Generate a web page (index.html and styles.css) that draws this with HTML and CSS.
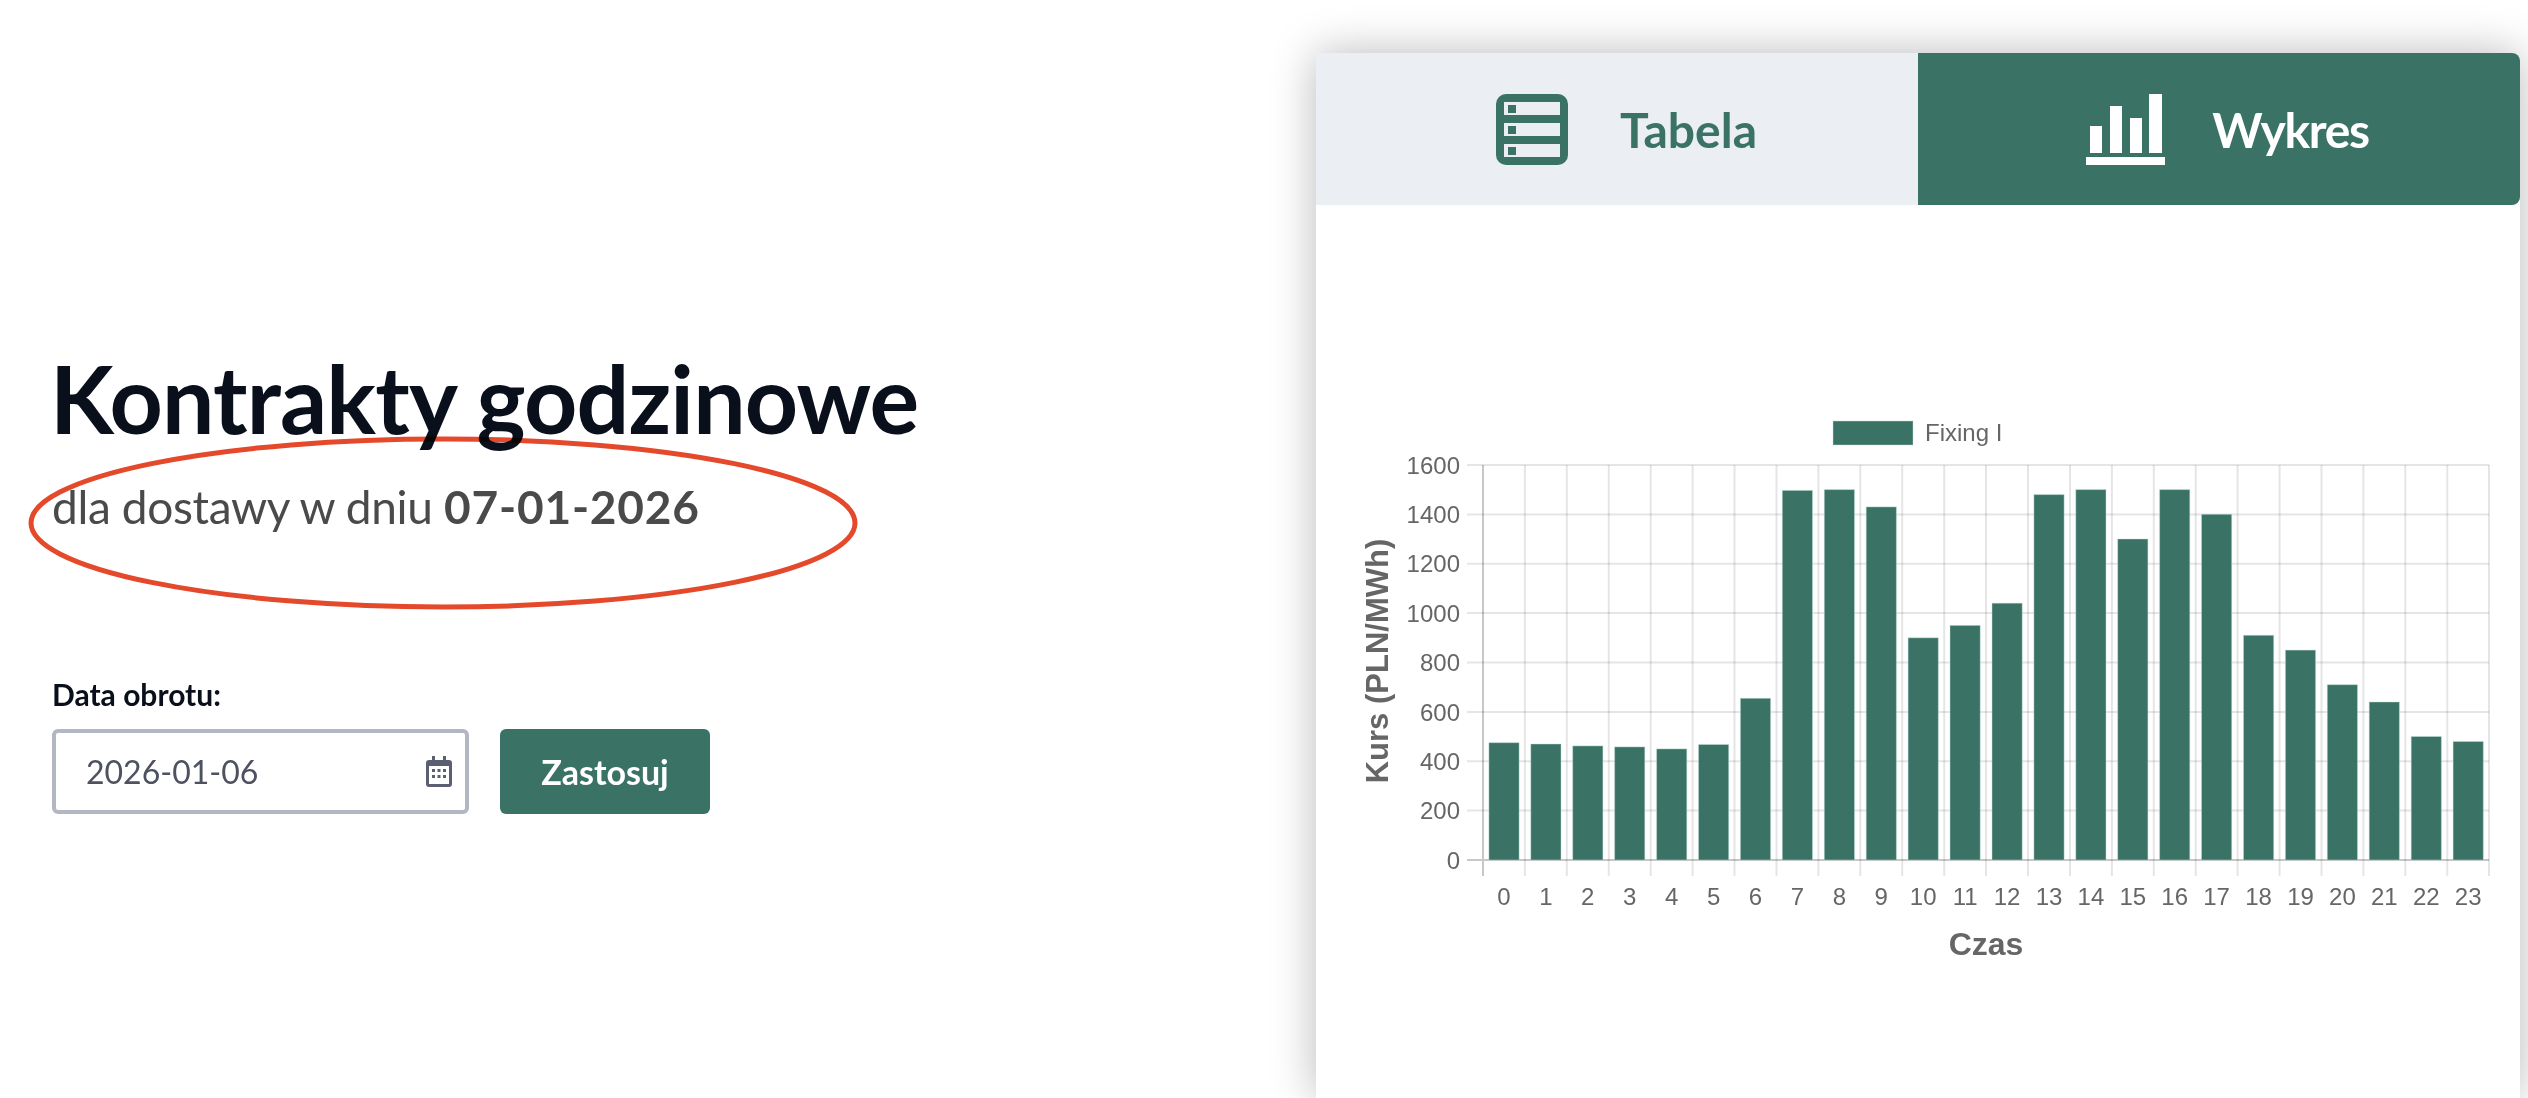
FILE: index.html
```html
<!DOCTYPE html>
<html lang="pl">
<head>
  <meta charset="UTF-8" />
  <meta name="viewport" content="width=device-width, initial-scale=1.0"/>
  <title>Kontrakty godzinowe</title>
  <link rel="stylesheet" href="styles.css">
</head>
<body>
  <div class="top-edge"></div>
  <div class="page">
    <section class="intro">
      <h1>Kontrakty godzinowe</h1>
      <p class="subtitle">dla dostawy w dniu <strong>07-01-2026</strong></p>

      <svg class="annotation" width="850" height="190" viewBox="0 0 850 190">
        <ellipse cx="425" cy="95" rx="412" ry="84" />
      </svg>

      <form class="date-form">
        <label for="date">Data obrotu:</label>
        <div class="date-row">
          <div class="date-input">
            <input type="text" id="date" value="2026-01-06" />
            <svg class="calendar" width="26" height="31" viewBox="0 0 26 31">
              <path fill="#5b5f71" fill-rule="evenodd" d="M6 0h3v4h8V0h3v4h3a3 3 0 0 1 3 3v21a3 3 0 0 1-3 3H3a3 3 0 0 1-3-3V7a3 3 0 0 1 3-3h3zM3 10v18h20V10z" />
              <path fill="#5b5f71" d="M6 13h3v3H6zM11.500 13h3v3h-3zM17 13h3v3h-3zM6 19h3v3H6zM11.500 19h3v3h-3zM17 19h3v3h-3z" />
            </svg>
          </div>
          <button type="button">Zastosuj</button>
        </div>
      </form>
    </section>

    <section class="card">
      <div class="tabs">
        <a class="tab">
          <svg width="72" height="71" viewBox="0 0 72 71">
            <rect width="72" height="71" rx="10" fill="#3a7265" />
            <path fill="#ebeff4" d="M8 8h56v13H8zM8 29h56v13H8zM8 50h56v13H8z" />
            <path fill="#3a7265" d="M12 11h8v8h-8zM12 32h8v8h-8zM12 53h8v8h-8z" />
          </svg>
          <span>Tabela</span>
        </a>
        <a class="tab active">
          <svg width="80" height="71" viewBox="0 0 80 71">
            <path fill="#fff" d="M4 32h12v27H4zM24 12h12v47H24zM44 24h12v35H44zM63 0h13v59H63zM0 63h79v8H0z" />
          </svg>
          <span>Wykres</span>
        </a>
      </div>

      <svg class="chart" width="1204" height="845" viewBox="1 0 1204 845">
        <!-- legend -->
        <rect class="bar" x="518" y="216" width="80" height="24" />
        <text class="tick" x="610" y="236">Fixing I</text>

        <!-- grid -->
        <path class="grid" d="M152 260H1174M152 309.400H1174M152 358.800H1174M152 408.100H1174M152 457.500H1174M152 506.900H1174M152 556.300H1174M152 605.600H1174" />
        <path class="grid" d="M209.900 260V671M251.800 260V671M293.800 260V671M335.700 260V671M377.600 260V671M419.500 260V671M461.500 260V671M503.400 260V671M545.300 260V671M587.200 260V671M629.200 260V671M671 260V671M713 260V671M755 260V671M796.900 260V671M838.800 260V671M880.700 260V671M922.600 260V671M964.600 260V671M1006.500 260V671M1048.400 260V671M1090.300 260V671M1132.300 260V671M1174 260V671" />
        <path class="axis" d="M168 260V671M152 655H1174" />

        <!-- y ticks -->
        <g class="tick y-ticks">
          <text x="145" y="268.500">1600</text>
          <text x="145" y="318">1400</text>
          <text x="145" y="367">1200</text>
          <text x="145" y="416.500">1000</text>
          <text x="145" y="466">800</text>
          <text x="145" y="515.500">600</text>
          <text x="145" y="565">400</text>
          <text x="145" y="614">200</text>
          <text x="145" y="663.500">0</text>
        </g>

        <!-- bars -->
        <g class="bars">
          <rect class="bar" x="173.900" y="537.700" width="30.200" height="117.300" />
          <rect class="bar" x="215.800" y="539" width="30.200" height="116" />
          <rect class="bar" x="257.700" y="540.900" width="30.200" height="114.100" />
          <rect class="bar" x="299.600" y="541.900" width="30.200" height="113.100" />
          <rect class="bar" x="341.600" y="543.900" width="30.200" height="111.100" />
          <rect class="bar" x="383.500" y="539.500" width="30.200" height="115.500" />
          <rect class="bar" x="425.400" y="493.300" width="30.200" height="161.700" />
          <rect class="bar" x="467.300" y="285.400" width="30.200" height="369.600" />
          <rect class="bar" x="509.300" y="284.600" width="30.200" height="370.400" />
          <rect class="bar" x="551.200" y="301.900" width="30.200" height="353.100" />
          <rect class="bar" x="593.100" y="432.800" width="30.200" height="222.200" />
          <rect class="bar" x="635" y="420.400" width="30.200" height="234.600" />
          <rect class="bar" x="677" y="398.200" width="30.200" height="256.800" />
          <rect class="bar" x="718.900" y="289.600" width="30.200" height="365.400" />
          <rect class="bar" x="760.800" y="284.600" width="30.200" height="370.400" />
          <rect class="bar" x="802.700" y="334" width="30.200" height="321" />
          <rect class="bar" x="844.600" y="284.600" width="30.200" height="370.400" />
          <rect class="bar" x="886.500" y="309.300" width="30.200" height="345.700" />
          <rect class="bar" x="928.500" y="430.300" width="30.200" height="224.700" />
          <rect class="bar" x="970.400" y="445.100" width="30.200" height="209.900" />
          <rect class="bar" x="1012.300" y="479.700" width="30.200" height="175.300" />
          <rect class="bar" x="1054.200" y="497" width="30.200" height="158" />
          <rect class="bar" x="1096.200" y="531.500" width="30.200" height="123.500" />
          <rect class="bar" x="1138.100" y="536.500" width="30.200" height="118.500" />
        </g>

        <!-- x ticks -->
        <g class="tick x-ticks">
          <text x="189" y="700">0</text>
          <text x="230.900" y="700">1</text>
          <text x="272.800" y="700">2</text>
          <text x="314.700" y="700">3</text>
          <text x="356.700" y="700">4</text>
          <text x="398.600" y="700">5</text>
          <text x="440.500" y="700">6</text>
          <text x="482.400" y="700">7</text>
          <text x="524.400" y="700">8</text>
          <text x="566.300" y="700">9</text>
          <text x="608.200" y="700">10</text>
          <text x="650.100" y="700">11</text>
          <text x="692.100" y="700">12</text>
          <text x="734" y="700">13</text>
          <text x="775.900" y="700">14</text>
          <text x="817.800" y="700">15</text>
          <text x="859.700" y="700">16</text>
          <text x="901.600" y="700">17</text>
          <text x="943.600" y="700">18</text>
          <text x="985.500" y="700">19</text>
          <text x="1027.400" y="700">20</text>
          <text x="1069.300" y="700">21</text>
          <text x="1111.300" y="700">22</text>
          <text x="1153.200" y="700">23</text>
        </g>

        <text class="axis-title" x="671" y="750">Czas</text>
        <text class="axis-title y-title" transform="translate(73 456) rotate(-90)">Kurs (PLN/MWh)</text>
      </svg>
    </section>
  </div>
</body>
</html>
```

FILE: styles.css
```css
html, body {
  margin: 0;
  height: 100%;
  overflow: hidden;
}

body {
  font-family: 'Lato', 'Noto Sans', sans-serif;
  background-color: #fff;
  color: #0a0f1c;
}

.top-edge {
  height: 0;
  box-shadow: 0 0 12px rgba(0, 0, 0, 0.12);
}

.page {
  display: flex;
  justify-content: space-between;
  height: 100%;
}

/* left column */
.intro {
  position: relative;
  padding: 343px 0 0 52px;
}

h1 {
  margin: 0 0 0 -2px;
  font-size: 93px;
  line-height: 110px;
  font-weight: 700;
  letter-spacing: -0.85px;
}

.subtitle {
  margin: 24px 0 0;
  font-size: 46px;
  line-height: 60px;
  color: #4a4a4a;
  letter-spacing: -0.35px;
}

.subtitle strong {
  font-weight: 700;
  letter-spacing: 0.8px;
}

.annotation {
  position: absolute;
  left: 18px;
  top: 428px;
  mix-blend-mode: multiply;
}

.annotation ellipse {
  fill: none;
  stroke: #e5492b;
  stroke-width: 5;
}

.date-form {
  margin-top: 140px;
}

label {
  display: block;
  font-size: 30px;
  line-height: 34px;
  font-weight: 700;
  margin-bottom: 18px;
}

.date-row {
  display: flex;
  gap: 31px;
}

.date-input {
  display: flex;
  align-items: center;
  box-sizing: border-box;
  width: 417px;
  height: 85px;
  padding: 0 13px 0 30px;
  border: 4px solid #b3b7c3;
  border-radius: 6px;
}

.date-input input {
  flex: 1;
  min-width: 0;
  border: none;
  outline: none;
  padding: 0;
  font-family: inherit;
  font-size: 32px;
  color: #4d5160;
}

button {
  width: 210px;
  height: 85px;
  padding: 0;
  border: none;
  border-radius: 6px;
  background-color: #3a7265;
  color: #fff;
  font-family: inherit;
  font-size: 34px;
  font-weight: 700;
  cursor: pointer;
}

/* right card */
.card {
  align-self: flex-start;
  width: 1204px;
  height: 1045px;
  margin: 53px 8px 0 0;
  background-color: #fff;
  border-radius: 3px 8px 0 0;
  box-shadow: 0 0 45px rgba(0, 0, 0, 0.28);
}

.tabs {
  display: flex;
  height: 152px;
}

.tab {
  display: flex;
  align-items: center;
  justify-content: center;
  box-sizing: border-box;
  gap: 52px;
  width: 602px;
  padding-left: 19px;
  background-color: #ebeff4;
  color: #3a7265;
  font-size: 48px;
  font-weight: 700;
  border-radius: 3px 0 0 0;
}

.tab.active {
  background-color: #3a7265;
  color: #fff;
  gap: 46px;
  padding-left: 17px;
  letter-spacing: -1.3px;
  border-radius: 0 8px 8px 0;
}

/* chart */
.chart {
  display: block;
  font-family: 'Liberation Sans', Arial, sans-serif;
}

.bar {
  fill: #3a7265;
  stroke: rgba(190, 225, 215, 0.45);
  stroke-width: 1;
}

.grid {
  fill: none;
  stroke: rgba(0, 0, 0, 0.1);
  stroke-width: 2;
}

.axis {
  fill: none;
  stroke: rgba(0, 0, 0, 0.22);
  stroke-width: 2;
}

.tick {
  font-size: 24px;
  fill: #666;
}

.y-ticks text {
  text-anchor: end;
}

.x-ticks text {
  text-anchor: middle;
}

.axis-title {
  font-size: 32px;
  font-weight: 700;
  fill: #666;
  text-anchor: middle;
}

.y-title {
  font-size: 31px;
}
```
